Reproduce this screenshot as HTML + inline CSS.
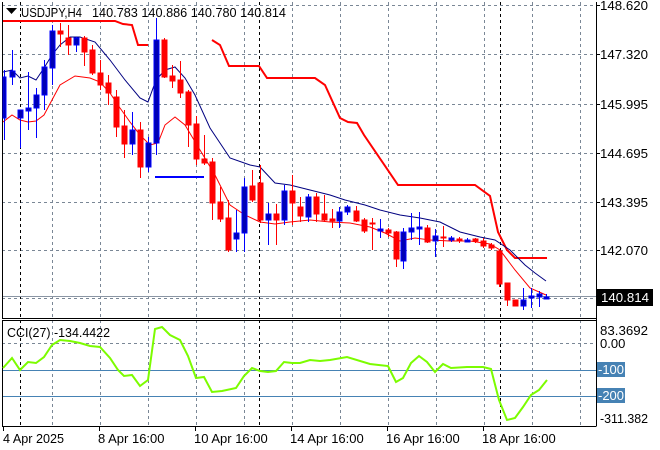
<!DOCTYPE html>
<html><head><meta charset="utf-8"><style>
html,body{margin:0;padding:0;background:#fff;width:660px;height:450px;overflow:hidden}
svg{display:block;font-family:"Liberation Sans",sans-serif}
</style></head><body>
<svg width="660" height="450" viewBox="0 0 660 450" xmlns="http://www.w3.org/2000/svg">
<rect width="660" height="450" fill="#fff"/>
<g stroke="#7a8796" stroke-width="1" stroke-dasharray="3,3" fill="none">
<path d="M52.5 2V426M100.5 2V426M148.5 2V426M196.5 2V426M244.5 2V426M292.5 2V426M340.5 2V426M388.5 2V426M436.5 2V426M484.5 2V426M532.5 2V426M580.5 2V426"/>
<path d="M2 5.5H596M2 54.5H596M2 104.5H596M2 153.5H596M2 202.5H596M2 250.5H596M2 298.5H596M2 343.5H596"/>
</g>
<g stroke="#000" stroke-width="1" stroke-dasharray="3,3"><path d="M20.5 2V426M259.5 2V426M500.5 2V426"/></g>
<path d="M2 296.5H596" stroke="#8a95a3"/>
<path d="M2 370.5H596M2 396.5H596" stroke="#4682b4"/>
<rect x="0" y="318" width="597" height="3" fill="#fff"/>
<path d="M2.5 2V318.5H596M2.5 320.5V426.5H596M2 320.5H596M596.5 2V426.5" stroke="#000" fill="none"/>
<g fill="none" stroke="#f00" stroke-width="2">
<polyline points="3,21 115,21 123,24 132,25 138,45 148,45"/>
<polyline points="212,40 220,45 229,66 259,66 267,78 315,78 325,85 340,118 348,122 357,123 364,135 398,185 475,185 490,196 498,232 507,250 515,258 523,258 547,258"/>
</g>
<path d="M155 177H204" stroke="#0000ff" stroke-width="2"/>
<polyline fill="none" stroke="#000080" stroke-width="1" points="3,72 12,70 20,78 28,76 36,80 44,68 52,55 60,45 70,37 80,37 95,42 110,60 125,80 140,98 148,102 156,80 165,70 175,67 185,78 195,95 210,128 230,158 250,165 260,167 275,183 290,185 310,190 330,195 345,200 365,205 380,210 400,215 420,218 440,222 460,232 480,237 495,240 510,250 525,265 535,273 546,281"/>
<polyline fill="none" stroke="#f00" stroke-width="1" points="3,122 12,115 20,120 28,122 36,121 44,115 52,100 60,85 75,76 90,78 100,82 110,93 120,108 130,122 140,135 150,145 158,143 165,125 175,117 185,125 200,150 215,175 230,205 245,215 260,222 275,224 290,222 310,220 330,222 350,223 370,227 385,233 400,241 415,238 430,240 450,241 470,241 490,244 500,250 515,270 530,288 546,295"/>
<g stroke-width="1">
<g stroke="#00f" fill="#0000b4">
<path d="M4.5 70V140M12.5 50V85M20.5 110V148M28.5 72V130M36.5 88V138M44.5 60V110M52.5 25V85M76.5 37V52M132.5 112V155M148.5 137V172M156.5 18V155M236.5 210V252M244.5 178V252M268.5 203V245M284.5 185V225M308.5 194V222M339.5 207V228M347.5 205V215M380.5 219V238M403.5 228V269M411.5 213V240M419.5 212V245M435.5 229V257M451.5 236V242M467.5 238V242M523.5 288V310M531.5 288V308M539.5 291V307M546.5 294V299"/>
<rect x="3" y="77" width="3" height="41"/><rect x="10" y="71" width="5" height="6"/><rect x="18" y="110" width="5" height="8"/><rect x="26" y="108" width="5" height="3"/><rect x="34" y="95" width="5" height="13"/><rect x="42" y="67" width="5" height="28"/><rect x="50" y="31" width="5" height="37"/><rect x="74" y="38" width="5" height="7"/><rect x="130" y="130" width="5" height="14"/><rect x="146" y="143" width="5" height="24"/><rect x="154" y="40" width="5" height="103"/><rect x="234" y="233" width="5" height="6"/><rect x="242" y="187" width="5" height="46"/><rect x="266" y="214" width="5" height="6"/><rect x="282" y="191" width="5" height="29"/><rect x="306" y="197" width="5" height="20"/><rect x="337" y="212" width="5" height="9"/><rect x="345" y="207" width="5" height="5"/><rect x="378" y="229" width="5" height="2"/><rect x="401" y="232" width="5" height="29"/><rect x="409" y="228" width="5" height="4"/><rect x="417" y="227" width="5" height="2"/><rect x="433" y="236" width="5" height="5"/><rect x="449" y="238" width="5" height="2"/><rect x="465" y="240" width="5" height="2"/><rect x="521" y="300" width="5" height="6"/><rect x="529" y="296" width="5" height="2"/><rect x="537" y="294" width="5" height="3"/><rect x="544" y="297" width="5" height="2"/>
</g>
<g stroke="#f00" fill="#f00">
<path d="M60.5 23V47M68.5 25V55M84.5 36V66M92.5 45V75M100.5 60V90M108.5 75V105M116.5 90V137M124.5 110V158M140.5 122V178M164.5 38V78M172.5 65V88M180.5 61V98M188.5 90V147M196.5 116V165M204.5 135V165M212.5 158V220M220.5 187V222M228.5 200V252M252.5 170V202M260.5 165V223M276.5 204V245M292.5 175V225M300.5 197V222M316.5 193V222M324.5 195V222M332.5 209V228M356.5 206V222M364.5 218V233M372.5 218V250M388.5 228V237M396.5 231V267M427.5 225V243M443.5 226V247M459.5 237V243M475.5 238V243M483.5 238V248M491.5 243V250M499.5 250V287M507.5 283V306M515.5 300V306"/>
<rect x="58" y="31" width="5" height="3"/><rect x="66" y="38" width="5" height="7"/><rect x="82" y="38" width="5" height="14"/><rect x="90" y="50" width="5" height="23"/><rect x="98" y="73" width="5" height="12"/><rect x="106" y="83" width="5" height="10"/><rect x="114" y="97" width="5" height="30"/><rect x="122" y="126" width="5" height="18"/><rect x="138" y="130" width="5" height="37"/><rect x="162" y="40" width="5" height="37"/><rect x="170" y="76" width="5" height="5"/><rect x="178" y="80" width="5" height="13"/><rect x="186" y="92" width="5" height="33"/><rect x="194" y="124" width="5" height="35"/><rect x="202" y="159" width="5" height="4"/><rect x="210" y="162" width="5" height="41"/><rect x="218" y="202" width="5" height="17"/><rect x="226" y="218" width="5" height="32"/><rect x="250" y="186" width="5" height="14"/><rect x="258" y="183" width="5" height="37"/><rect x="274" y="214" width="5" height="6"/><rect x="290" y="191" width="5" height="12"/><rect x="298" y="207" width="5" height="9"/><rect x="314" y="197" width="5" height="17"/><rect x="322" y="214" width="5" height="6"/><rect x="330" y="219" width="5" height="2"/><rect x="354" y="211" width="5" height="10"/><rect x="362" y="220" width="5" height="11"/><rect x="370" y="223" width="5" height="1"/><rect x="386" y="230" width="5" height="3"/><rect x="394" y="232" width="5" height="27"/><rect x="425" y="228" width="5" height="14"/><rect x="441" y="237" width="5" height="1"/><rect x="457" y="239" width="5" height="2"/><rect x="473" y="239" width="5" height="2"/><rect x="481" y="241" width="5" height="5"/><rect x="489" y="245" width="5" height="3"/><rect x="497" y="251" width="5" height="33"/><rect x="505" y="283" width="5" height="17"/><rect x="513" y="300" width="5" height="6"/>
</g>
</g>
<polyline fill="none" stroke="#7cfc00" stroke-width="2" points="3,368 12,358 20,370 28,362 36,363 44,357 52,345 60,340 70,341 80,343 90,346 100,347 110,358 118,370 124,376 132,375 140,386 148,380 155,329 162,327 170,335 180,340 188,356 196,378 204,377 212,392 222,391 236,388 244,376 252,368 260,371 268,372 276,371 284,362 292,363 300,363 310,360 320,361 330,360 347,357 370,364 388,366 396,382 403,378 411,363 419,356 427,362 435,372 443,364 451,368 467,367 483,367 491,369 499,400 507,420 515,418 523,407 531,395 539,390 547,380"/>
<g font-size="13" fill="#000">
<path d="M6 8H17L11.5 14Z" fill="#000"/>
<text x="21" y="17" textLength="61" lengthAdjust="spacingAndGlyphs">USDJPY,H4</text>
<text x="92" y="17" textLength="194" lengthAdjust="spacingAndGlyphs">140.783 140.886 140.780 140.814</text>
<text x="7" y="337" textLength="103" lengthAdjust="spacingAndGlyphs">CCI(27) -134.4422</text>
<text x="600" y="10" textLength="48" lengthAdjust="spacingAndGlyphs">148.620</text>
<text x="600" y="59" textLength="48" lengthAdjust="spacingAndGlyphs">147.320</text>
<text x="600" y="109" textLength="48" lengthAdjust="spacingAndGlyphs">145.995</text>
<text x="600" y="158" textLength="48" lengthAdjust="spacingAndGlyphs">144.695</text>
<text x="600" y="207" textLength="48" lengthAdjust="spacingAndGlyphs">143.395</text>
<text x="600" y="255" textLength="48" lengthAdjust="spacingAndGlyphs">142.070</text>
<rect x="597" y="289" width="56" height="17" fill="#000"/>
<text x="601" y="302" fill="#fff" textLength="48" lengthAdjust="spacingAndGlyphs">140.814</text>
<text x="600" y="335" textLength="48" lengthAdjust="spacingAndGlyphs">83.3692</text>
<text x="600" y="348">0.00</text>
<rect x="597" y="362" width="28" height="15" fill="#4682b4"/>
<text x="598" y="374" fill="#fff">-100</text>
<rect x="597" y="388" width="28" height="15" fill="#4682b4"/>
<text x="598" y="400" fill="#fff">-200</text>
<text x="600" y="423" textLength="48" lengthAdjust="spacingAndGlyphs">-311.382</text>
<text x="3" y="443" textLength="61" lengthAdjust="spacingAndGlyphs">4 Apr 2025</text>
<text x="98" y="443">8 Apr 16:00</text>
<text x="194" y="443">10 Apr 16:00</text>
<text x="290" y="443">14 Apr 16:00</text>
<text x="386" y="443">16 Apr 16:00</text>
<text x="482" y="443">18 Apr 16:00</text>
</g>
<path d="M3.5 426V431M99.5 426V431M195.5 426V431M291.5 426V431M387.5 426V431M483.5 426V431M596 5.5H600M596 54.5H600M596 104.5H600M596 153.5H600M596 202.5H600M596 250.5H600" stroke="#000"/>
</svg>
</body></html>
